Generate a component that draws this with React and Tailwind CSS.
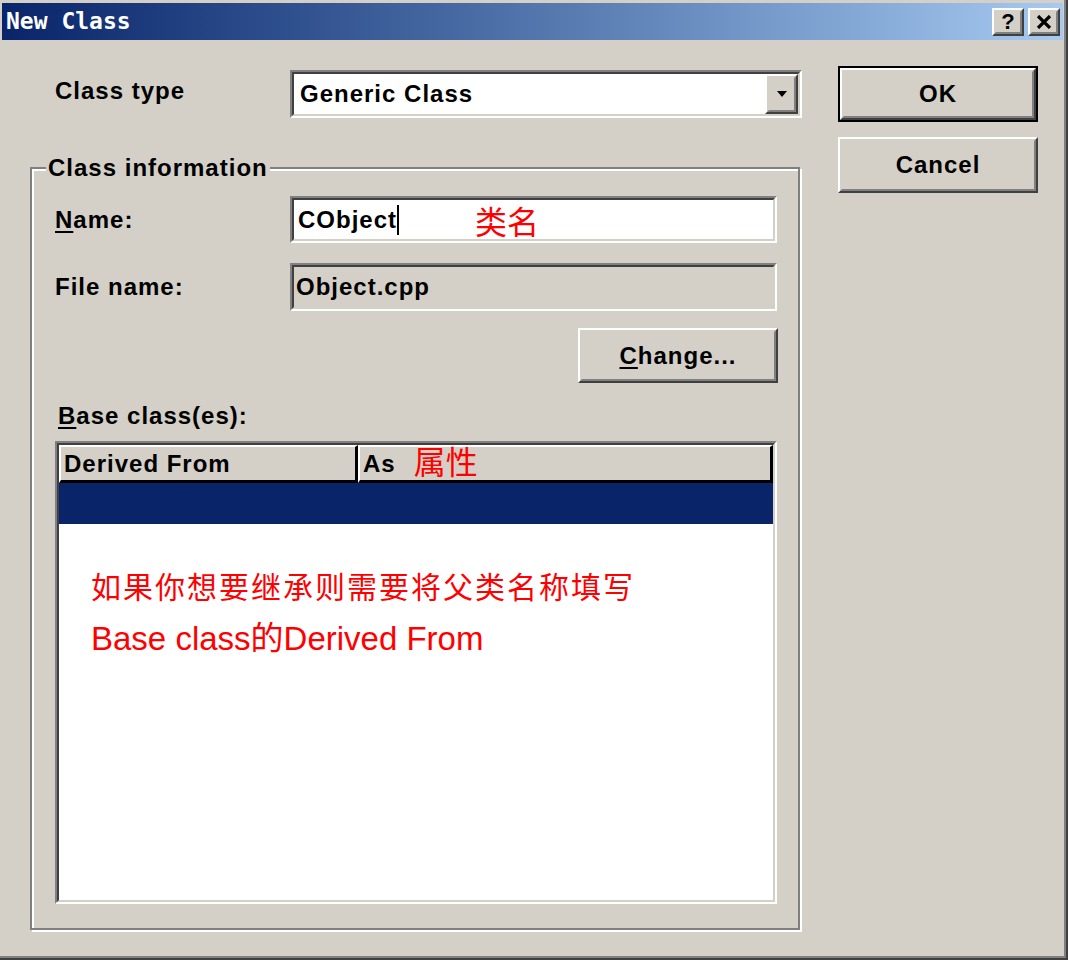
import React from "react";

const font = { fontFamily: '"Liberation Sans", Arial, sans-serif' };

// sunken 3d field (edit, combo, list)
const Sunken = ({ className = "", inner = "", children }) => (
  <div className={`border-2 border-t-[#808080] border-l-[#808080] border-b-white border-r-white ${className}`}>
    <div className={`w-full h-full border-2 border-t-[#404040] border-l-[#404040] border-b-[#d4d0c8] border-r-[#d4d0c8] ${inner}`}>
      {children}
    </div>
  </div>
);

// raised 3d button face
const Raised = ({ className = "", inner = "", children }) => (
  <div className={`border-2 border-t-white border-l-white border-b-[#404040] border-r-[#404040] ${className}`}>
    <div className={`w-full h-full border-2 border-t-[#d4d0c8] border-l-[#d4d0c8] border-b-[#808080] border-r-[#808080] flex items-center justify-center ${inner}`}>
      {children}
    </div>
  </div>
);

const U = ({ children }) => <span className="underline underline-offset-[3px] decoration-2">{children}</span>;

const cjk = { fontFamily: '"Noto Sans CJK SC", sans-serif' };

export default function App() {
  return (
    <div className="w-[1068px] h-[960px] bg-[#d4d0c8] border-r-2 border-b-2 border-[#404040] text-black" style={font}>
      <div className="w-full h-full border-r-2 border-b-2 border-[#808080] pt-[3px] pl-[2px] pr-[1px] flex flex-col">
        {/* title bar */}
        <div className="h-[37px] flex items-center justify-between bg-gradient-to-r from-[#0a246a] to-[#a6caf0] pl-[4px] pr-[3px]">
          <span className="text-white font-bold text-[23px] leading-none" style={{ fontFamily: '"DejaVu Sans Mono", "Liberation Mono", monospace' }}>
            New Class
          </span>
          <div className="flex gap-[4px]">
            <Raised className="w-[32px] h-[28px] bg-[#d4d0c8]">
              <span className="font-bold text-[22px] leading-none">?</span>
            </Raised>
            <Raised className="w-[32px] h-[28px] bg-[#d4d0c8]">
              <svg width="16" height="14" viewBox="0 0 16 14">
                <path d="M2 1 L14 13 M14 1 L2 13" stroke="black" strokeWidth="3.2" />
              </svg>
            </Raised>
          </div>
        </div>

        {/* body */}
        <div className="flex pl-[28px] text-[24px] font-bold tracking-[1px]">
          <div className="w-[772px]">
            <div className="mt-[30px] h-[48px] flex items-center">
              <div className="w-[260px] pl-[25px] -mt-[6px]">Class type</div>
              <Sunken className="w-[512px] h-[48px]" inner="bg-white flex items-center">
                <span className="flex-1 pl-[6px]">Generic Class</span>
                <Raised className="w-[33px] h-full bg-[#d4d0c8]">
                  <svg width="12" height="7" viewBox="0 0 12 7">
                    <path d="M1 0 H11 L6 6 Z" fill="black" />
                  </svg>
                </Raised>
              </Sunken>
            </div>

            <fieldset className="mt-[36px] w-[770px] h-[776px] border-2 border-[#808080] shadow-[inset_2px_2px_0_#fff,2px_2px_0_#fff] pl-[23px] pr-[19px] m-0 min-w-0">
              <legend className="-ml-[9px] px-[2px] bg-[#d4d0c8] leading-[28px]">Class information</legend>

              <div className="mt-[14px] flex items-center h-[47px]">
                <div className="w-[235px]"><U>N</U>ame:</div>
                <Sunken className="w-[487px] h-[47px]" inner="bg-white flex items-center pl-[4px]">
                  <span>CObject</span>
                  <span className="w-[2px] h-[30px] bg-black"></span>
                  <span className="ml-[76px] text-[#ff0000] text-[32px] font-normal tracking-normal" style={cjk}>类名</span>
                </Sunken>
              </div>

              <div className="mt-[20px] flex items-center h-[48px]">
                <div className="w-[235px]">File name:</div>
                <Sunken className="w-[487px] h-[48px]" inner="bg-[#d4d0c8] flex items-center pl-[2px]">
                  <span>Object.cpp</span>
                </Sunken>
              </div>

              <div className="mt-[17px] flex justify-end">
                <Raised className="w-[200px] h-[55px] mr-[1px]">
                  <span><U>C</U>hange...</span>
                </Raised>
              </div>

              <div className="mt-[18px] pl-[3px] leading-[30px]"><U>B</U>ase class(es):</div>

              <Sunken className="mt-[10px] w-[722px] h-[463px]" inner="bg-white flex flex-col">
                <div className="flex h-[38px]">
                  <div className="w-[299px] bg-[#d4d0c8] border-t-2 border-l-2 border-t-white border-l-white border-b-[3px] border-r-[3px] border-black flex items-center pl-[3px]">
                    Derived From
                  </div>
                  <div className="flex-1 bg-[#d4d0c8] border-t-2 border-l-2 border-t-white border-l-white border-b-[3px] border-r-[3px] border-black flex items-center pl-[3px]">
                    <span>As</span>
                    <span className="ml-[18px] -mt-[8px] text-[#ff0000] text-[32px] font-normal tracking-normal" style={cjk}>属性</span>
                  </div>
                </div>
                <div className="h-[41px] bg-[#0a246a]"></div>
                <div className="pl-[32px] pt-[34px] text-[#ff0000] font-normal leading-[54px]">
                  <div className="text-[30px] tracking-[2px]" style={cjk}>如果你想要继承则需要将父类名称填写</div>
                  <div className="text-[33px] tracking-normal" style={{ fontFamily: '"Liberation Sans", "Noto Sans CJK SC", sans-serif' }}>Base class的Derived From</div>
                </div>
              </Sunken>
            </fieldset>
          </div>

          {/* buttons */}
          <div className="ml-[36px] w-[200px] mt-[26px] flex flex-col gap-[15px]">
            <div className="border-2 border-black h-[56px]">
              <Raised className="w-full h-full">OK</Raised>
            </div>
            <Raised className="w-[200px] h-[56px]">Cancel</Raised>
          </div>
        </div>
      </div>
    </div>
  );
}
